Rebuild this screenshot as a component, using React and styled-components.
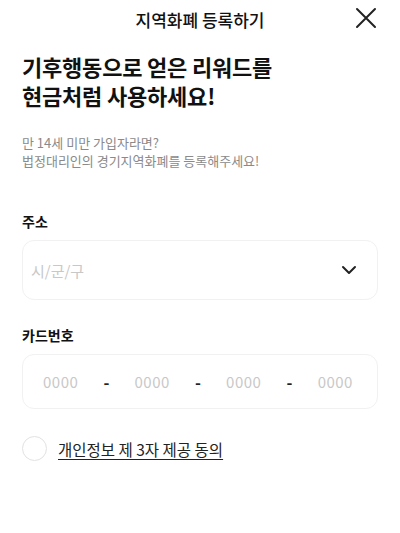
import React, { useState } from 'react';
import styled, { createGlobalStyle } from 'styled-components';

const GlobalStyle = createGlobalStyle`
  body {
    margin: 0;
    background: #ffffff;
    font-family: 'Noto Sans CJK KR', 'Noto Sans', sans-serif;
    color: #111;
  }
`;

export default function App() {
  const [agreed, setAgreed] = useState(false);
  const parts = ['0000', '0000', '0000', '0000'];

  return (
    <Page>
      <GlobalStyle />
      <Header>
        <HeaderTitle>지역화폐 등록하기</HeaderTitle>
        <CloseButton aria-label="닫기">
          <svg width="22" height="22" viewBox="0 0 22 22">
            <path d="M2 2L20 20M20 2L2 20" stroke="#222" strokeWidth="2" strokeLinecap="round" />
          </svg>
        </CloseButton>
      </Header>

      <Headline>
        기후행동으로 얻은 리워드를
        <br />
        현금처럼 사용하세요!
      </Headline>

      <Notice>
        만 14세 미만 가입자라면?
        <br />
        법정대리인의 경기지역화폐를 등록해주세요!
      </Notice>

      <Field $gap={41}>
        <Label>주소</Label>
        <SelectBox>
          <Placeholder>시/군/구</Placeholder>
          <svg width="16" height="10" viewBox="0 0 16 10">
            <path d="M2 2L8 8L14 2" stroke="#222" strokeWidth="2" fill="none" strokeLinecap="round" strokeLinejoin="round" />
          </svg>
        </SelectBox>
      </Field>

      <Field $gap={25}>
        <Label>카드번호</Label>
        <CardBox>
          {parts.map((p, i) => (
            <React.Fragment key={i}>
              {i > 0 && <Dash>-</Dash>}
              <CardPart>{p}</CardPart>
            </React.Fragment>
          ))}
        </CardBox>
      </Field>

      <Agree onClick={() => setAgreed(!agreed)}>
        <Circle $checked={agreed} />
        <AgreeText>개인정보 제 3자 제공 동의</AgreeText>
      </Agree>
    </Page>
  );
}

const Page = styled.div`
  width: 400px;
  min-height: 533px;
  padding: 0 22px;
  box-sizing: border-box;
`;

const Header = styled.div`
  position: relative;
  height: 38px;
  display: flex;
  align-items: center;
  justify-content: center;
`;

const HeaderTitle = styled.h2`
  margin: 0;
  font-size: 17px;
  font-weight: 500;
  color: #111;
`;

const CloseButton = styled.button`
  position: absolute;
  right: 1px;
  top: 7px;
  border: none;
  background: none;
  padding: 0;
  display: flex;
`;

const Headline = styled.h1`
  margin: 14px 0 0;
  font-size: 22px;
  line-height: 29px;
  font-weight: 700;
  letter-spacing: -0.2px;
  color: #111;
`;

const Notice = styled.p`
  margin: 24px 0 0;
  font-size: 13px;
  line-height: 18px;
  color: #8a8a8a;
`;

const Field = styled.div`
  display: flex;
  flex-direction: column;
  gap: 9px;
  margin-top: ${(p) => p.$gap}px;
`;

const Label = styled.div`
  font-size: 14px;
  font-weight: 700;
  color: #111;
`;

const Box = styled.div`
  border: 1px solid #f1f1f1;
  border-radius: 12px;
  display: flex;
  align-items: center;
  box-sizing: border-box;
`;

const SelectBox = styled(Box)`
  height: 60px;
  padding: 0 20px 0 8px;
  justify-content: space-between;
`;

const Placeholder = styled.span`
  font-size: 15px;
  color: #c8c8c8;
`;

const CardBox = styled(Box)`
  height: 55px;
  padding: 0 24px 0 20px;
  justify-content: space-between;
`;

const CardPart = styled.span`
  font-size: 15px;
  color: #c8c8c8;
  letter-spacing: 0.5px;
`;

const Dash = styled.span`
  font-size: 16px;
  font-weight: 700;
  color: #222;
`;

const Agree = styled.label`
  display: flex;
  align-items: center;
  gap: 11px;
  margin-top: 27px;
  cursor: pointer;
`;

const Circle = styled.span`
  width: 25px;
  height: 25px;
  border-radius: 50%;
  border: 1px solid #e2e2e2;
  background: ${(p) => (p.$checked ? '#222' : '#fff')};
  box-sizing: border-box;
`;

const AgreeText = styled.span`
  font-size: 15.5px;
  color: #222;
  text-decoration: underline;
  text-underline-offset: 3px;
`;
